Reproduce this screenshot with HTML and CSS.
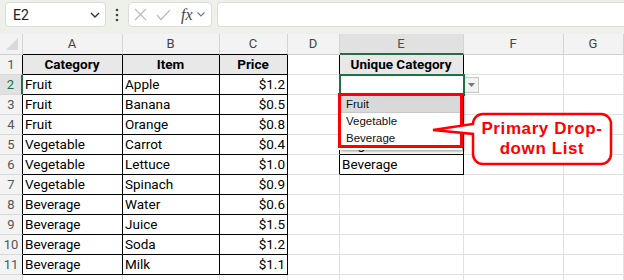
FILE: index.html
```html
<!DOCTYPE html>
<html lang="en">
<head>
    <meta charset="UTF-8">
    <title>Unique Category Drop-down</title>
    <link rel="stylesheet" href="styles.css">
</head>
<body>
    <div class="topbar">
        <div class="namebox">
            <span>E2</span>
            <svg width="10" height="6" viewBox="0 0 10 6"><polyline points="1,1 5,5 9,1" fill="none" stroke="#333" stroke-width="1.4"/></svg>
        </div>
        <div class="dots">
            <svg width="4" height="14" viewBox="0 0 4 14"><circle cx="2" cy="2" r="1.3" fill="#444"/><circle cx="2" cy="7" r="1.3" fill="#444"/><circle cx="2" cy="12" r="1.3" fill="#444"/></svg>
        </div>
        <div class="fxbox">
            <svg class="ic-x" width="13" height="13" viewBox="0 0 13 13"><path d="M1 1 L12 12 M12 1 L1 12" stroke="#bdbdbd" stroke-width="1.2"/></svg>
            <svg class="ic-ok" width="15" height="12" viewBox="0 0 15 12"><polyline points="1,6 5,10.5 14,1" fill="none" stroke="#bdbdbd" stroke-width="1.2"/></svg>
            <span class="fx">fx</span>
            <svg class="ic-dn" width="8" height="5" viewBox="0 0 8 5"><polyline points="0.5,0.5 4,4 7.5,0.5" fill="none" stroke="#777" stroke-width="1.1"/></svg>
        </div>
        <div class="fxinput"></div>
    </div>

    <div class="sheet">
        <div class="c corner"><svg width="22" height="20" viewBox="0 0 22 20"><polygon points="18,4 18,16 6,16" fill="#d9d9d9"/></svg></div>
        <div class="c colh bt">A</div><div class="c colh bt">B</div><div class="c colh bt">C</div><div class="c colh">D</div><div class="c colh sel">E</div><div class="c colh">F</div><div class="c colh">G</div>

        <div class="c rowh bl">1</div><div class="c hd b">Category</div><div class="c hd b">Item</div><div class="c hd b">Price</div><div class="c bl"></div><div class="c hd b">Unique Category</div><div class="c"></div><div class="c"></div>
        <div class="c rowh sel">2</div><div class="c b">Fruit</div><div class="c b">Apple</div><div class="c b num">$1.2</div><div class="c bl"></div><div class="c b active"></div><div class="c"></div><div class="c"></div>
        <div class="c rowh bl">3</div><div class="c b">Fruit</div><div class="c b">Banana</div><div class="c b num">$0.5</div><div class="c bl"></div><div class="c b"></div><div class="c"></div><div class="c"></div>
        <div class="c rowh bl">4</div><div class="c b">Fruit</div><div class="c b">Orange</div><div class="c b num">$0.8</div><div class="c bl"></div><div class="c b">Fruit</div><div class="c"></div><div class="c"></div>
        <div class="c rowh bl">5</div><div class="c b">Vegetable</div><div class="c b">Carrot</div><div class="c b num">$0.4</div><div class="c bl"></div><div class="c b">Vegetable</div><div class="c"></div><div class="c"></div>
        <div class="c rowh bl">6</div><div class="c b">Vegetable</div><div class="c b">Lettuce</div><div class="c b num">$1.0</div><div class="c bl"></div><div class="c b">Beverage</div><div class="c"></div><div class="c"></div>
        <div class="c rowh bl">7</div><div class="c b">Vegetable</div><div class="c b">Spinach</div><div class="c b num">$0.9</div><div class="c"></div><div class="c"></div><div class="c"></div><div class="c"></div>
        <div class="c rowh bl">8</div><div class="c b">Beverage</div><div class="c b">Water</div><div class="c b num">$0.6</div><div class="c"></div><div class="c"></div><div class="c"></div><div class="c"></div>
        <div class="c rowh bl">9</div><div class="c b">Beverage</div><div class="c b">Juice</div><div class="c b num">$1.5</div><div class="c"></div><div class="c"></div><div class="c"></div><div class="c"></div>
        <div class="c rowh bl">10</div><div class="c b">Beverage</div><div class="c b">Soda</div><div class="c b num">$1.2</div><div class="c"></div><div class="c"></div><div class="c"></div><div class="c"></div>
        <div class="c rowh bl">11</div><div class="c b">Beverage</div><div class="c b">Milk</div><div class="c b num">$1.1</div><div class="c"></div><div class="c"></div><div class="c"></div><div class="c"></div>
        <div class="c rowh">12</div><div class="c"></div><div class="c"></div><div class="c"></div><div class="c"></div><div class="c"></div><div class="c"></div><div class="c"></div>
    </div>

    <!-- drop-down opened on E2 -->
    <div class="ddbtn"><svg width="7" height="4" viewBox="0 0 7 4"><polygon points="0,0 7,0 3.5,4" fill="#777"/></svg></div>
    <div class="ddlist">
        <div class="dditem hl">Fruit</div>
        <div class="dditem">Vegetable</div>
        <div class="dditem">Beverage</div>
    </div>
    <div class="ddmark"></div>

    <div class="callout">
        <svg width="185" height="56" viewBox="0 0 185 56"><path d="M53 3 H171 A10 10 0 0 1 181 13 V43 A10 10 0 0 1 171 53 H53 A10 10 0 0 1 43 43 V23 L3 19 L43 13 A10 10 0 0 1 53 3 Z" fill="#fff" stroke="#f00" stroke-width="2.5"/></svg>
        <div class="callout-text">Primary Drop-<br>down List</div>
    </div>
</body>
</html>
```

FILE: styles.css
```css
body {
    margin: 0;
    width: 624px;
    height: 280px;
    overflow: hidden;
    position: relative;
    background-color: #fff;
    font-family: Roboto, "Liberation Sans", sans-serif;
}
.topbar {
    display: flex;
    align-items: flex-start;
    height: 34px;
    padding: 2px 0 0 5px;
    box-sizing: border-box;
    background-color: #edf1ea;
}
.namebox {
    width: 101px;
    height: 25px;
    box-sizing: border-box;
    background-color: white;
    border: 1px solid #dcdcdc;
    border-radius: 4px;
    display: flex;
    align-items: center;
    justify-content: space-between;
    padding: 0 5px 0 7px;
    font-size: 14px;
    color: #222;
}
.dots {
    width: 22px;
    height: 25px;
    display: flex;
    align-items: center;
    justify-content: center;
}
.fxbox {
    width: 84px;
    height: 25px;
    box-sizing: border-box;
    background-color: white;
    border: 1px solid #dcdcdc;
    border-radius: 4px;
    display: flex;
    align-items: center;
    padding-left: 5px;
}
.ic-ok {
    margin-left: 9px;
}
.fx {
    margin-left: 10px;
    font-family: "Liberation Serif", serif;
    font-style: italic;
    font-size: 16px;
    color: #444;
}
.ic-dn {
    margin-left: 4px;
}
.fxinput {
    flex: 1;
    height: 25px;
    margin-left: 5px;
    box-sizing: border-box;
    background-color: white;
    border: 1px solid #dcdcdc;
    border-right: none;
    border-radius: 4px 0 0 4px;
}
.sheet {
    display: grid;
    grid-template-columns: 23px 100px 97px 68px 52px 124px 100px 60px;
    grid-template-rows: 21px;
    grid-auto-rows: 20px;
}
.c {
    box-sizing: border-box;
    border-right: 1px solid #e1e1e1;
    border-bottom: 1px solid #e1e1e1;
    padding: 0 3px 0 2px;
    font-size: 13.5px;
    line-height: 19px;
    color: #000;
    white-space: nowrap;
    overflow: hidden;
}
.corner {
    background-color: #f3f3f3;
    border-right-color: #d4d4d4;
    border-bottom-color: #d0d0d0;
    padding: 0;
}
.corner svg {
    display: block;
}
.colh {
    background-color: #f3f3f3;
    border-right-color: #d4d4d4;
    border-bottom-color: #d0d0d0;
    text-align: center;
    font-size: 13px;
    line-height: 20px;
    color: #444;
}
.rowh {
    background-color: #f3f3f3;
    border-right-color: #d0d0d0;
    border-bottom-color: #d9d9d9;
    padding: 0;
    text-align: center;
    font-size: 13px;
    color: #555;
}
.hd {
    background-color: #e8e8e8;
    font-weight: bold;
    text-align: center;
}
.num {
    text-align: right;
    padding-right: 2px;
}
.bt {
    border-bottom-color: #000;
}
.bl {
    border-right-color: #000;
}
.b {
    border-right-color: #000;
    border-bottom-color: #000;
}
.colh.sel {
    background-color: #e1e1e1;
    border-bottom: 2px solid #1e7145;
    line-height: 19px;
    color: #2f5f44;
}
.rowh.sel {
    background-color: #e1e1e1;
    border-right: 2px solid #1e7145;
    color: #1e7145;
}
.active {
    position: relative;
    z-index: 1;
    outline: 2px solid #1e7145;
    outline-offset: -1px;
}
.ddbtn {
    position: absolute;
    left: 464px;
    top: 77px;
    width: 15px;
    height: 16px;
    box-sizing: border-box;
    background-color: #f2f2f2;
    border: 1px solid #c6c6c6;
    display: flex;
    align-items: center;
    justify-content: center;
}
.ddlist {
    position: absolute;
    left: 339px;
    top: 94px;
    width: 123px;
    height: 56px;
    box-sizing: border-box;
    padding-top: 2px;
    background-color: white;
    box-shadow: 2px 1px 3px rgba(0,0,0,0.45);
    z-index: 2;
}
.ddmark {
    position: absolute;
    left: 338px;
    top: 93px;
    width: 125px;
    height: 55px;
    box-sizing: border-box;
    border: 3px solid #f00;
    z-index: 3;
}
.dditem {
    height: 17px;
    line-height: 17px;
    padding-left: 7px;
    font-family: "Liberation Sans", Arial, sans-serif;
    font-size: 11.5px;
    color: #111;
}
.dditem.hl {
    background-color: #d9d9d9;
    border-bottom: 1px solid #c8c8c8;
    height: 16px;
    line-height: 16px;
}
.callout {
    position: absolute;
    left: 430px;
    top: 111px;
    width: 185px;
    height: 56px;
    z-index: 4;
}
.callout svg {
    position: absolute;
    left: 0;
    top: 0;
}
.callout-text {
    position: absolute;
    left: 43px;
    top: 3px;
    width: 138px;
    height: 50px;
    display: flex;
    align-items: center;
    justify-content: center;
    text-align: center;
    font-family: "Liberation Sans", Arial, sans-serif;
    font-weight: bold;
    font-size: 17px;
    letter-spacing: 0.6px;
    line-height: 20px;
    color: #f00;
}
```
